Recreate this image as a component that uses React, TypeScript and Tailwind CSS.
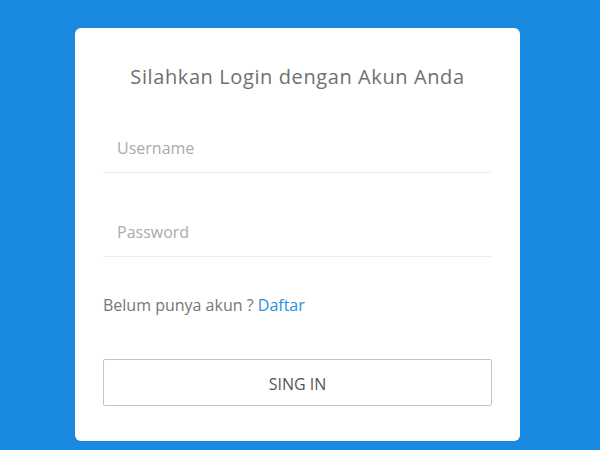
import React from 'react';

const App: React.FC = () => {
  return (
    <div className="min-h-[450px] bg-[#1a8ae0] pt-[28px] pb-[10px] font-['Open_Sans',sans-serif]">
      <div className="ml-[75px] w-[445px] rounded-[6px] bg-white px-[28px] pt-[35px] pb-[35px]">
        <h1 className="text-center text-[20px] leading-[28px] tracking-[0.6px] text-[#707070]">
          Silahkan Login dengan Akun Anda
        </h1>

        <form className="mt-[33px] flex flex-col" onSubmit={(e) => e.preventDefault()}>
          <input
            type="text"
            placeholder="Username"
            className="h-[49px] w-full border-b border-[#eeeeee] px-[14px] text-[16px] text-[#555] outline-none placeholder:text-[#ababab]"
          />
          <input
            type="password"
            placeholder="Password"
            className="mt-[35px] h-[49px] w-full border-b border-[#eeeeee] px-[14px] text-[16px] text-[#555] outline-none placeholder:text-[#ababab]"
          />

          <p className="mt-[36px] text-[16px] leading-[24px] text-[#777]">
            Belum punya akun ? <a href="#" className="text-[#2b8fe0]">Daftar</a>
          </p>

          <button
            type="submit"
            className="mt-[42px] h-[47px] w-full rounded-[2px] border border-[#c4c4c4] bg-white pt-[2px] text-[16px] text-[#555]"
          >
            SING IN
          </button>
        </form>
      </div>
    </div>
  );
};

export default App;
